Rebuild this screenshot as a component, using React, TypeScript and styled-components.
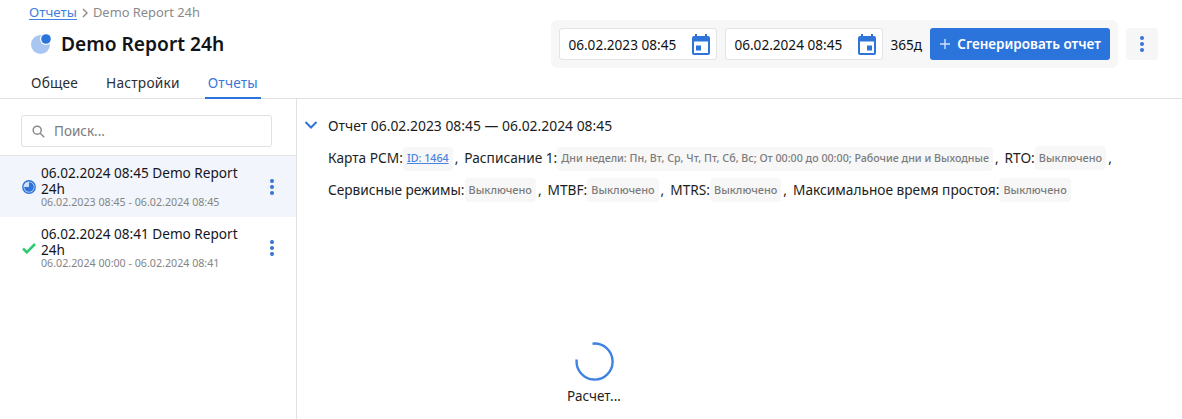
import React from "react";
import styled, { createGlobalStyle } from "styled-components";

const Global = createGlobalStyle`
  html, body { margin: 0; padding: 0; background: #fff; }
  body { font-family: "Noto Sans", "Open Sans", sans-serif; color: #14161a; overflow: hidden; }
  * { box-sizing: border-box; }
`;
const Page = styled.div`width: 1182px; height: 419px; display: flex; flex-direction: column; overflow: hidden;`;
const Header = styled.header`height: 99px; flex: none; display: flex; justify-content: space-between; border-bottom: 1px solid #dfe1e3; padding: 0 24px 0 29px;`;
const HeaderLeft = styled.div`display: flex; flex-direction: column;`;
const Crumbs = styled.div`display: flex; align-items: center; height: 25px; font-size: 12.9px; color: #8a8a8a; line-height: 25px;`;
const CrumbLink = styled.a`color: #3f7fe0; font-size: 13.4px; text-decoration: underline; text-underline-offset: 2px;`;
const CrumbSep = styled.svg`width: 12px; height: 12px; margin: 0 2px; flex: none;`;
const TitleRow = styled.div`display: flex; align-items: center; gap: 10px; height: 38px;`;
const Title = styled.h1`margin: 0; font-size: 19.2px; font-weight: 600; line-height: 38px; color: #111418;`;
const Tabs = styled.nav`display: flex; gap: 23px; margin-top: 6px;`;
const Tab = styled.div<{ $active?: boolean }>`
  height: 30px; padding: 3px 3px 0; margin-left: -1px; font-size: 13.7px; line-height: 22px; letter-spacing: .22px;
  color: ${p => (p.$active ? "#3b78d8" : "#2a2e33")};
  border-bottom: 2px solid ${p => (p.$active ? "#2b74dc" : "transparent")};
`;
const Toolbar = styled.div`display: flex; align-items: flex-start; gap: 8px; padding-top: 20px;`;
const ControlPanel = styled.div`display: flex; align-items: center; gap: 8px; height: 48px; padding: 0 8px; background: #f7f7f7; border-radius: 6px;`;
const DateField = styled.div`width: 158px; height: 32px; flex: none; display: flex; align-items: center; justify-content: space-between; padding: 0 6px 0 8px; background: #fff; border: 1px solid #e3e4e6; border-radius: 3px; font-size: 13.6px; color: #111;`;
const Days = styled.span`font-size: 13.6px; color: #111; margin: 0 0 0 -1px;`;
const GenerateButton = styled.button`height: 32px; width: 180px; flex: none; display: flex; align-items: center; justify-content: center; gap: 6px; border: 0; border-radius: 3px; background: #2b74dc; color: #fff; font: 600 13.5px "Noto Sans", sans-serif; padding: 0 6px; white-space: nowrap;`;
const MenuButton = styled.button`width: 32px; height: 32px; margin-top: 8px; border: 0; border-radius: 4px; background: #f6f6f6; display: flex; align-items: center; justify-content: center; padding: 0;`;
const Body = styled.div`flex: 1; display: flex; min-height: 0;`;
const Sidebar = styled.aside`width: 297px; flex: none; border-right: 1px solid #dfe1e3; display: flex; flex-direction: column;`;
const SearchWrap = styled.div`padding: 16px 24px 0 21px; border-bottom: 1px solid #e2e4e6; height: 57px;`;
const SearchBox = styled.div`height: 32px; display: flex; align-items: center; gap: 9px; padding: 0 10px; border: 1px solid #dfe1e3; border-radius: 3px; font-size: 13.5px; color: #7b7b7b;`;
const Item = styled.div<{ $active?: boolean }>`height: 61px; display: flex; align-items: center; padding: 0 21px 0 22px; background: ${p => (p.$active ? "#f2f5fb" : "#fff")};`;
const ItemIcon = styled.div`width: 19px; flex: none; display: flex; align-items: center;`;
const ItemText = styled.div`flex: 1; min-width: 0;`;
const ItemTitle = styled.div`font-size: 13.6px; line-height: 16px; color: #14161a; width: 205px;`;
const ItemSub = styled.div`font-size: 10.7px; line-height: 11px; color: #858585;`;
const Main = styled.main`flex: 1; padding: 16px 8px 0 7px; display: flex; flex-direction: column; position: relative;`;
const ReportHead = styled.div`display: flex; align-items: center; gap: 10px; height: 20px; font-size: 13.9px; color: #1a1c20;`;
const Params = styled.div`margin: 7px 0 0 24px; font-size: 13.7px; line-height: 32px; color: #1c1e22;`;
const Chip = styled.span<{ $status?: boolean }>`display: inline-block; height: 24px; line-height: 23px; padding: 0 4px; background: #f7f7f7; border-radius: 4px; font-size: ${p => (p.$status ? "10.95px" : "10.7px")}; font-weight: 500; color: #7c7c7c; vertical-align: 1px;`;
const ChipLink = styled.span`color: #4a83e0; text-decoration: underline;`;
const Comma = styled.span`margin: 0 6px 0 2px;`;
const Loader = styled.div`position: absolute; left: 266px; top: 242px; width: 62px; display: flex; flex-direction: column; align-items: center; gap: 6px; font-size: 13.5px; color: #222; white-space: nowrap;`;

const Dots = () => (
  <svg width="6" height="18" viewBox="0 0 6 18" fill="#3573d6"><circle cx="3" cy="3" r="2" /><circle cx="3" cy="9" r="2" /><circle cx="3" cy="15" r="2" /></svg>
);
const CalendarIcon = ({ right }: { right?: boolean }) => (
  <svg width="18" height="21" viewBox="0 0 18 21">
    <path fill="#2f74d8" d="M3 0h2v2h8V0h2v2h1a2 2 0 0 1 2 2v15a2 2 0 0 1-2 2H2a2 2 0 0 1-2-2V4a2 2 0 0 1 2-2h1zM2 7.5V19h14V7.5z" />
    <rect x={right ? 9 : 4} y="11.5" width="5" height="5" fill="#2f74d8" />
  </svg>
);

export default function App() {
  return (
    <Page>
      <Global />
      <Header>
        <HeaderLeft>
          <Crumbs>
            <CrumbLink>Отчеты</CrumbLink>
            <CrumbSep viewBox="0 0 12 12"><path d="M4 2l4 4-4 4" fill="none" stroke="#8a8a8a" strokeWidth="1.4" /></CrumbSep>
            <span>Demo Report 24h</span>
          </Crumbs>
          <TitleRow>
            <svg width="22" height="22" viewBox="0 0 22 22">
              <circle cx="11.5" cy="11.5" r="9.5" fill="#a9c6f2" />
              <circle cx="17" cy="6" r="6" fill="#fff" />
              <circle cx="17" cy="6" r="4.8" fill="#2b74dc" />
            </svg>
            <Title>Demo Report 24h</Title>
          </TitleRow>
          <Tabs>
            <Tab>Общее</Tab>
            <Tab>Настройки</Tab>
            <Tab $active>Отчеты</Tab>
          </Tabs>
        </HeaderLeft>
        <Toolbar>
          <ControlPanel>
            <DateField>06.02.2023 08:45<CalendarIcon /></DateField>
            <DateField>06.02.2024 08:45<CalendarIcon right /></DateField>
            <Days>365д</Days>
            <GenerateButton>
              <svg width="12" height="12" viewBox="0 0 12 12"><path d="M6 1v10M1 6h10" stroke="#cfe0fa" strokeWidth="1.4" /></svg>
              Сгенерировать отчет
            </GenerateButton>
          </ControlPanel>
          <MenuButton aria-label="Меню"><Dots /></MenuButton>
        </Toolbar>
      </Header>
      <Body>
        <Sidebar>
          <SearchWrap>
            <SearchBox>
              <svg width="13" height="13" viewBox="0 0 13 13" fill="none" stroke="#8a8a8a" strokeWidth="1.5"><circle cx="5.2" cy="5.2" r="4" /><path d="M8.2 8.2l4 4" /></svg>
              Поиск...
            </SearchBox>
          </SearchWrap>
          <Item $active>
            <ItemIcon>
              <svg width="14" height="14" viewBox="0 0 14 14">
                <circle cx="7" cy="7" r="6.2" fill="#cfe0f8" stroke="#2f74d8" strokeWidth="1.4" />
                <path d="M7 2.2A4.8 4.8 0 1 1 2.2 7H7z" fill="#2f74d8" />
              </svg>
            </ItemIcon>
            <ItemText>
              <ItemTitle>06.02.2024 08:45 Demo Report 24h</ItemTitle>
              <ItemSub>06.02.2023 08:45 - 06.02.2024 08:45</ItemSub>
            </ItemText>
            <Dots />
          </Item>
          <Item>
            <ItemIcon>
              <svg width="14" height="12" viewBox="0 0 14 12"><path d="M1 6.5l3.8 3.8L13 2" fill="none" stroke="#2fcb72" strokeWidth="2.6" /></svg>
            </ItemIcon>
            <ItemText>
              <ItemTitle>06.02.2024 08:41 Demo Report 24h</ItemTitle>
              <ItemSub>06.02.2024 00:00 - 06.02.2024 08:41</ItemSub>
            </ItemText>
            <Dots />
          </Item>
        </Sidebar>
        <Main>
          <ReportHead>
            <svg width="14" height="10" viewBox="0 0 14 10"><path d="M1.5 2l5.5 5.5L12.5 2" fill="none" stroke="#2f74d8" strokeWidth="2" /></svg>
            <span>Отчет 06.02.2023 08:45 — 06.02.2024 08:45</span>
          </ReportHead>
          <Params>
            <span>Карта РСМ:</span><Chip><ChipLink>ID: 1464</ChipLink></Chip><Comma>,</Comma>
            <span>Расписание 1:</span><Chip>Дни недели: Пн, Вт, Ср, Чт, Пт, Сб, Вс; От 00:00 до 00:00; Рабочие дни и Выходные</Chip><Comma>,</Comma>
            <span>RTO:</span><Chip $status>Выключено</Chip><Comma>,</Comma>
            <br />
            <span>Сервисные режимы:</span><Chip $status>Выключено</Chip><Comma>,</Comma>
            <span>MTBF:</span><Chip $status>Выключено</Chip><Comma>,</Comma>
            <span>MTRS:</span><Chip $status>Выключено</Chip><Comma>,</Comma>
            <span>Максимальное время простоя:</span><Chip $status>Выключено</Chip>
          </Params>
          <Loader>
            <svg width="40" height="40" viewBox="0 0 40 40" fill="none"><path d="M18 2.2A18 18 0 1 1 2.2 18" transform="translate(0.5 0.5)" stroke="#3f82e2" strokeWidth="2.4" /></svg>
            <span>Расчет...</span>
          </Loader>
        </Main>
      </Body>
    </Page>
  );
}
